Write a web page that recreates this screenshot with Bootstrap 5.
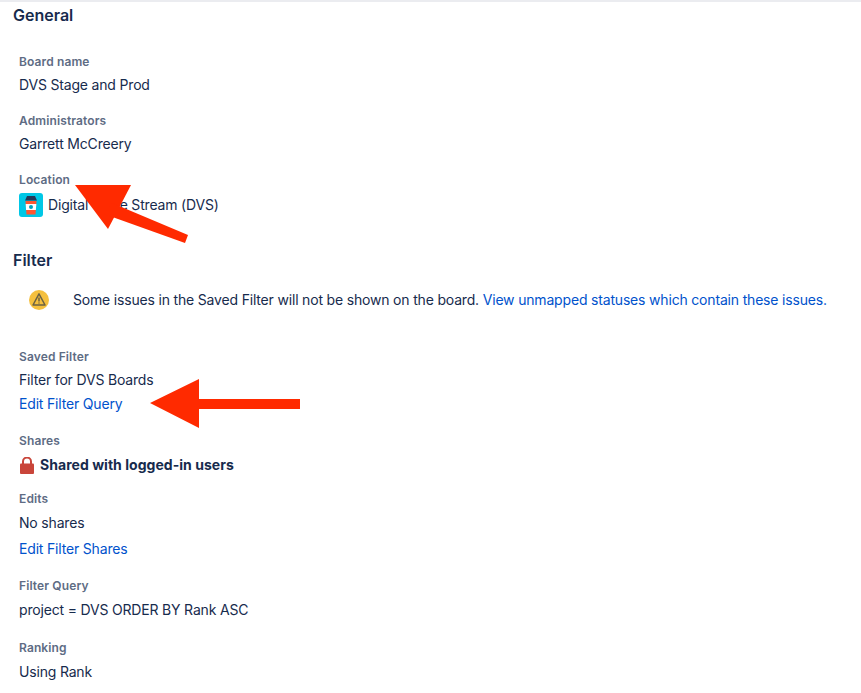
<!DOCTYPE html>
<html lang="en">
<head>
    <meta charset="UTF-8">
    <meta name="viewport" content="width=device-width, initial-scale=1.0">
    <title>Board settings</title>
    <link href="https://cdn.jsdelivr.net/npm/bootstrap@5.3.0/dist/css/bootstrap.min.css" rel="stylesheet">
    <style>
        html, body { height: 693px; overflow: hidden; }
        body { font-family: Inter, "Liberation Sans", sans-serif; font-size: 14px; line-height: 24px; letter-spacing: -0.18px; color: #172B4D; background: #fff; }
        a { color: #0052CC; text-decoration: none; }
        .page-wrap { height: 693px; border-top: 2px solid #ebecf0; padding: 0 13px; }
        .sect-title { font-size: 16px; font-weight: 600; line-height: 20px; margin: 0; letter-spacing: 0; }
        .sect-general { margin-top: 3px; }
        .sect-filter { margin-top: 33px; }
        .field-group { padding-left: 6px; }
        .field-label { font-size: 12px; font-weight: 600; line-height: 16px; letter-spacing: 0.12px; color: #5E6C84; margin-top: 16px; }
        .field-value { line-height: 24px; margin-top: 3px; }
        .field-label.fl-first { margin-top: 29px; }
        .field-label.fl-saved { margin-top: 37px; }
        .field-label.fl-wide { margin-top: 17px; }
        .field-label.fl-edits { margin-top: 14px; }
        .field-label.fl-rank { margin-top: 18px; }
        .field-value.val-gap { margin-top: 4px; }
        .field-value.loc-row { margin-top: 5px; gap: 5px; }
        .link-gap { margin-top: 2px; }
        .warn-row { margin-top: 18px; padding-left: 16px; gap: 24px; height: 24px; }
        .shared-row { gap: 6px; padding-left: 1px; font-weight: 700; letter-spacing: 0.04px; }
        .proj-logo { width: 24px; height: 24px; border-radius: 3px; background: #00C7E6; }
        .arrows { position: absolute; left: 0; top: 0; pointer-events: none; }
    </style>
</head>
<body>
<div class="page-wrap">
    <!-- General -->
    <h2 class="sect-title sect-general">General</h2>
    <div class="field-group">
        <div class="field-label fl-first">Board name</div>
        <div class="field-value">DVS Stage and Prod</div>
        <div class="field-label">Administrators</div>
        <div class="field-value">Garrett McCreery</div>
        <div class="field-label">Location</div>
        <div class="field-value d-flex align-items-center loc-row">
            <svg class="proj-logo" viewBox="0 0 24 24">
                <path fill="#253858" d="M8 3h8l2 4.500H6z"/>
                <path fill="#FF5630" d="M6.500 8h11l-1 13.500h-9z"/>
                <path fill="#fff" d="M6.700 11h10.600l-.4 6H7.100z"/>
                <circle cx="12" cy="14" r="2" fill="#00A3BF"/>
            </svg>
            <span>Digital Value Stream (DVS)</span>
        </div>
    </div>

    <!-- Filter -->
    <h2 class="sect-title sect-filter">Filter</h2>
    <div class="d-flex align-items-center warn-row">
        <svg width="20" height="20" viewBox="0 0 20 20">
            <circle cx="10" cy="10" r="10" fill="#F5C03E"/>
            <path d="M10 3.800 16 15H4z" fill="none" stroke="#6B6243" stroke-width="1.500" stroke-linejoin="round"/>
            <path d="M10 7.500v4M10 12.400v1" stroke="#6B6243" stroke-width="1.500"/>
        </svg>
        <div>Some issues in the Saved Filter will not be shown on the board. <a href="#">View unmapped statuses which contain these issues.</a></div>
    </div>
    <div class="field-group">
        <div class="field-label fl-saved">Saved Filter</div>
        <div class="field-value">Filter for DVS Boards</div>
        <div><a href="#">Edit Filter Query</a></div>
        <div class="field-label fl-wide">Shares</div>
        <div class="field-value val-gap d-flex align-items-center shared-row">
            <svg width="14" height="17" viewBox="0 0 14 17">
                <path d="M3 7V4.500a4 4 0 0 1 8 0V7" fill="none" stroke="#C9453A" stroke-width="2"/>
                <rect x="0" y="6.500" width="14" height="10.500" rx="1" fill="#C9453A"/>
            </svg>
            <span>Shared with logged-in users</span>
        </div>
        <div class="field-label fl-edits">Edits</div>
        <div class="field-value val-gap">No shares</div>
        <div class="link-gap"><a href="#">Edit Filter Shares</a></div>
        <div class="field-label fl-wide">Filter Query</div>
        <div class="field-value val-gap">project = DVS ORDER BY Rank ASC</div>
        <div class="field-label fl-rank">Ranking</div>
        <div class="field-value val-gap">Using Rank</div>
    </div>
</div>

<!-- red annotation arrows -->
<svg class="arrows" width="861" height="693">
    <path fill="#FF2A00" d="M75 185H131L108 229z"/>
    <path fill="#FF2A00" d="M112 203 188 235 185 243 104 214z"/>
    <path fill="#FF2A00" d="M150 403 199 379V399H300V409H199V428z"/>
</svg>
<script src="https://cdn.jsdelivr.net/npm/bootstrap@5.3.0/dist/js/bootstrap.bundle.min.js"></script>
</body>
</html>
